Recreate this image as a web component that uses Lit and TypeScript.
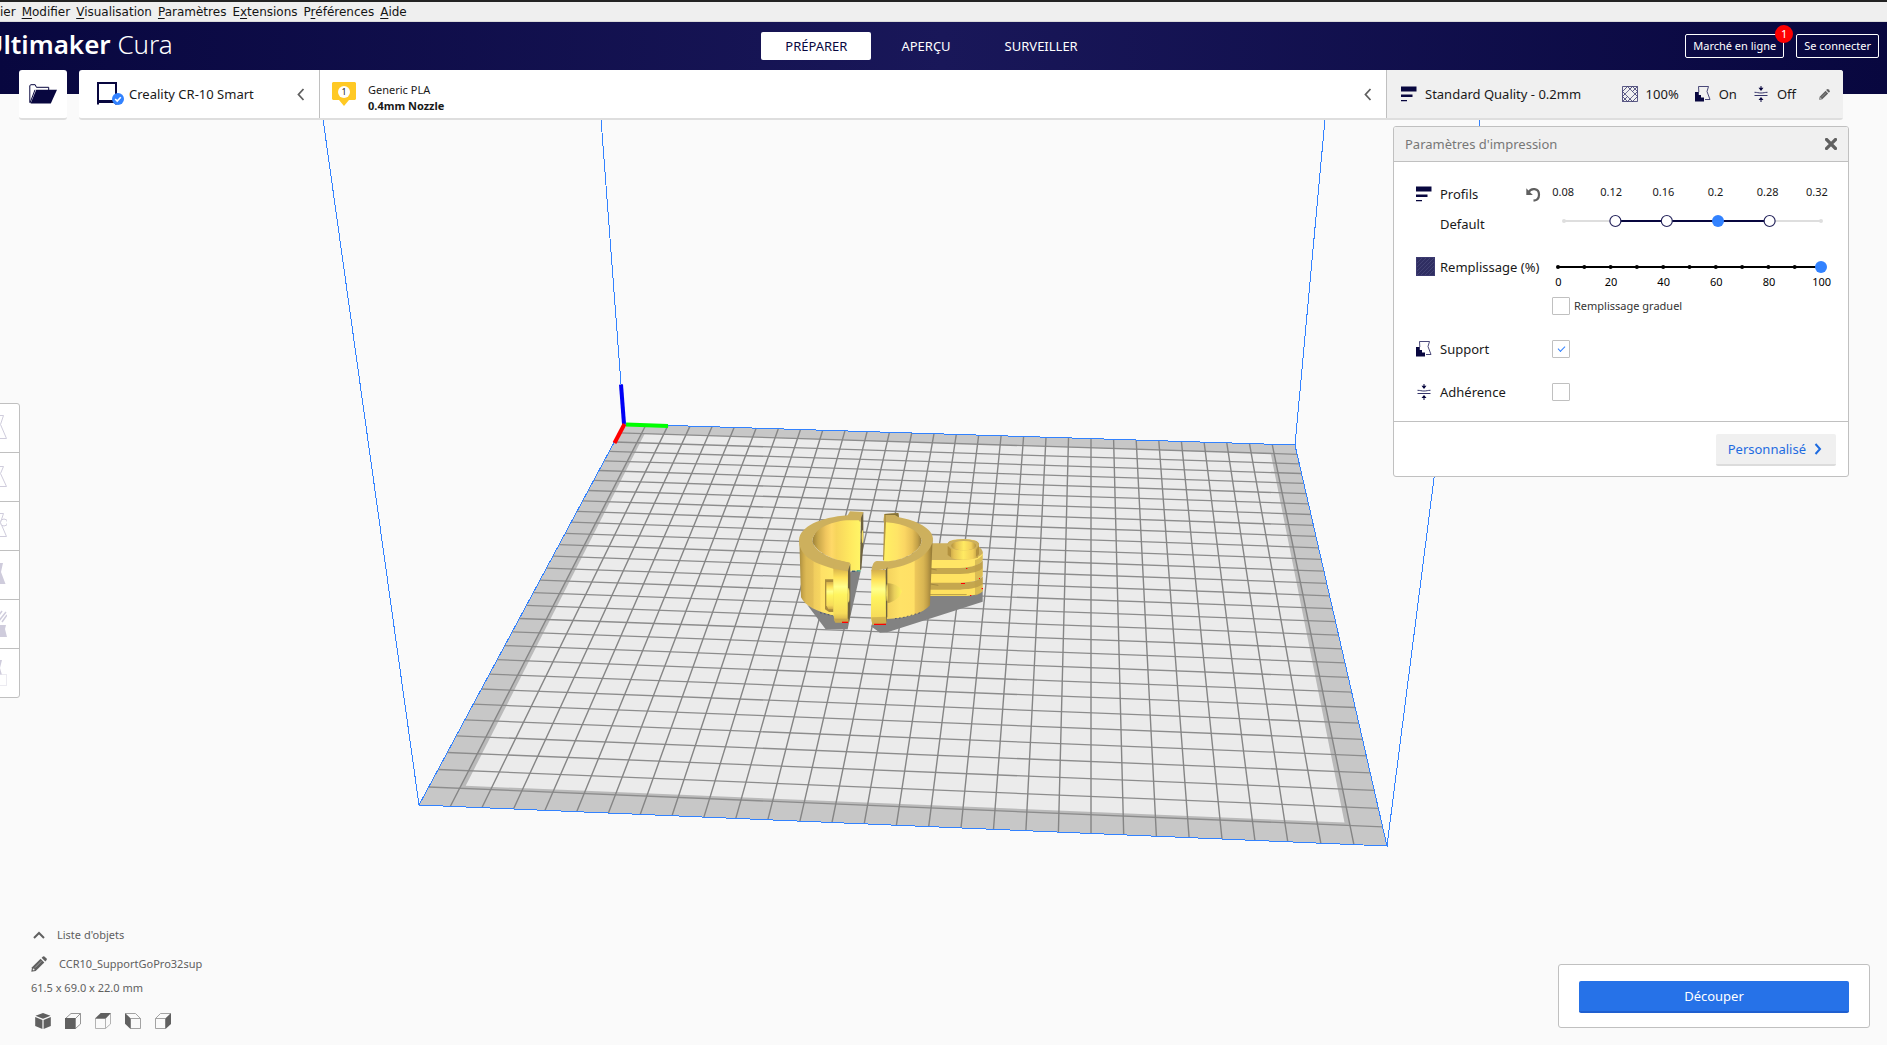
import { LitElement, html, css, svg } from "lit";
import { customElement, state } from "lit/decorators.js";

type Point = [number, number];

/* ---------- icons ---------- */
const NAVY = "#08073f";

const iconFolder = html`<svg width="28" height="20" viewBox="0 0 28 20" aria-hidden="true">
  <path d="M.8 18.5V1.5L2 .7h4.2l1.2 2.6h12.3v3.2" fill="none" stroke=${NAVY} stroke-width="1"/>
  <path d="M1 19 6 5.8" stroke=${NAVY} stroke-width="1"/>
  <path d="M7.2 5.8H28L21.8 19.5H1.6z" fill=${NAVY}/></svg>`;

const iconPrinter = html`<svg width="28" height="24" viewBox="0 0 28 24" aria-hidden="true">
  <path fill-rule="evenodd" fill=${NAVY} d="M0 0h20v22.5h-2V21H2v1.5H0zM2 2v16h16V2z"/>
  <circle cx="21" cy="17" r="6" fill="#3282ff"/>
  <path d="m18.2 17 2 2 3.6-3.8" fill="none" stroke="#fff" stroke-width="1.6"/></svg>`;

const iconChevron = (d: string, w: number, h: number, color: string, sw = 2) => html`<svg
  width=${w} height=${h} viewBox="0 0 ${w} ${h}" aria-hidden="true"><path d=${d} fill="none" stroke=${color} stroke-width=${sw}/></svg>`;

const iconSpool = html`<svg width="24" height="24" viewBox="0 0 24 24" aria-hidden="true">
  <path d="M1 0h22l1 1v16l-1 1h-6l-5 6-5-6H1l-1-1V1z" fill="#ffc924"/>
  <circle cx="12" cy="10" r="6" fill="#fff"/>
  <text x="12" y="13" font-size="9" text-anchor="middle" fill="#222">1</text></svg>`;

const iconQuality = html`<svg width="16" height="16" viewBox="0 0 16 16" aria-hidden="true">
  <path d="M0 .5h15.5v5H0zM0 8.500h11.500v2.600H0zM0 14h6v1.300H0z" fill=${NAVY}/></svg>`;

const iconInfill = html`<svg width="16" height="16" viewBox="0 0 16 16" aria-hidden="true">
  <path d="M.5.5h15v15H.5zM.5 5.500l5-5M.5 10.500 10.500.5M.5 15.500 15.500.5M5.500 15.500 15.500 5.500M10.500 15.500l5-5M10.500.5l5 5M5.500.5l10 10M.5 5.500l10 10M.5 10.500l5 5"
    fill="none" stroke="#35346a" stroke-width=".8"/>
  <path d="M8 3.500 12.500 8 8 12.500 3.500 8z" fill="#f0f0f0"/></svg>`;

const iconSolid = html`<svg width="20" height="20" viewBox="0 0 20 20" aria-hidden="true">
  <rect x=".5" y=".5" width="18" height="18" fill="#2f2e62" stroke="#3c3a70"/>
  <path d="M1 6l5-5M1 10l9-9M1 14l13-13M1 18 18 1M5 18 18 5M9 18l9-9M13 18l5-5" stroke="#4b4a7c" stroke-width=".7"/></svg>`;

const iconSupport = html`<svg width="16" height="16" viewBox="0 0 16 16" aria-hidden="true">
  <path d="M0 6h3.800v3H6v2.500h3v4H0z" fill=${NAVY}/>
  <path d="M3.800 6 3.500.5h10L12 5.500l3 8h-5" fill="none" stroke="#35346a" stroke-width=".9"/></svg>`;

const iconAdhesion = html`<svg width="16" height="16" viewBox="0 0 16 16" aria-hidden="true">
  <path d="M1.500 6.300c2.800 0 3.700.7 6.500.7s3.700-.7 6.500-.7M1.500 9.500h13" fill="none" stroke="#35346a"/>
  <path d="M8 0v2M8 14v2" stroke=${NAVY}/>
  <path d="M5.500 1.800h5L8 5zM5.500 14h5L8 11z" fill=${NAVY}/></svg>`;

const iconPencil = (size: number) => html`<svg width=${size} height=${size} viewBox="0 0 16 16" aria-hidden="true">
  <path d="M.3 15.700 1 11.300 9.600 2.700l3.700 3.700L4.700 15z" fill="#606060"/>
  <path d="M10.600 1.700 12 .4q.7-.5 1.400 0l2.200 2.200q.6.700 0 1.400l-1.300 1.400z" fill="#606060"/>
  <path d="m4 11.600 6.400-6.400" stroke="#bbb" stroke-width=".7"/><circle cx="2.600" cy="13.400" r=".9" fill="#eee"/></svg>`;

const iconClose = html`<svg width="12" height="12" viewBox="0 0 12 12" aria-hidden="true">
  <path d="m1.500 1.500 9 9m0-9-9 9" stroke="#606060" stroke-width="3.200" stroke-linecap="square"/></svg>`;

const iconUndo = html`<svg width="15" height="15" viewBox="0 0 15 15" aria-hidden="true">
  <path d="M2.500 5.300C5 .6 13 .9 13 7.700c0 3.500-2.200 5.600-5.500 6" fill="none" stroke="#606060" stroke-width="2.200"/>
  <path d="M.3 1.200V8h6.500z" fill="#606060"/></svg>`;

const viewIcons = [
  { name: "Vue 3D", body: svg`<path d="M8 0 15.500 2.800 8 5.800.5 2.800zM.2 4 7.400 6.900V16L.2 12.900zM15.800 4 8.600 6.900V16l7.200-3.100z" fill="#606060"/>` },
  { name: "Vue de face", body: svg`<path d="M.5 5.500 6 .5h9.500V11l-5 4.500M10.500 5.500l5-5" fill="none" stroke="#8a8a8a" stroke-width=".9"/><path d="M0 5h10.700v11H0z" fill="#606060"/>` },
  { name: "Vue de dessus", body: svg`<path d="M.5 5.500h10v10H.5zM10.500 15.500l5-4.500V.5" fill="none" stroke="#aaa" stroke-width=".9"/><path d="M0 5.500 5.700 0H16l-5.200 5.500z" fill="#606060"/>` },
  { name: "Vue de gauche", body: svg`<path d="M5.500 5.500h10v10h-10zM.5.5h10l5 5" fill="none" stroke="#999" stroke-width=".9"/><path d="M0 0l5.500 5.200V16L0 10.800z" fill="#606060"/>` },
  { name: "Vue de droite", body: svg`<path d="M.5 5.500h10v10H.5zM.5 5.500l5-5h10" fill="none" stroke="#999" stroke-width=".9"/><path d="M10.500 5.300 16 0v11l-5.500 5z" fill="#606060"/>` },
];

const toolIcons = [
  { name: "Déplacer", body: svg`<path d="M5.500 1.500h21l-3 9 6 14h-27l6-14z" fill="none" stroke="#cfccdc"/>` },
  { name: "Mettre à l'échelle", body: svg`<path d="M5.500 3.500h21l-3 7 6 13h-27l6-13z" fill="none" stroke="#cfccdc"/>` },
  { name: "Tourner", body: svg`<path d="M5.500 1.500h21l-3 9 6 14h-27l6-14z" fill="none" stroke="#cfccdc"/><circle cx="27" cy="10.500" r="3.500" fill="#fff" stroke="#cfccdc"/>` },
  { name: "Miroir", body: svg`<path d="M5 2h21l-2 9 4.500 12h-27l6-12z" fill="#cfccdc"/>` },
  { name: "Paramètres par modèle", body: svg`<path d="M1 15h28l-1 4 2 8H0z" fill="#cfccdc"/><path d="m19 5-4 4m7-7-7 8m10-9-8 11m12-10-8 10m9-7-5 7" stroke="#cfccdc" stroke-width="1.500"/>` },
  { name: "Bloqueur de support", body: svg`<path d="M5 1h20l-2 8 2 7H2z" fill="#cfccdc"/><path d="M14.500 15.500h15v11h-15z" fill="#fff" stroke="#d8d6e2" stroke-dasharray="1 1"/>` },
];

/* ---------- build plate, drawn in perspective ---------- */
const CORNERS: Point[] = [[624, 424], [1295, 445], [1387, 846], [419, 805]];
const CELLS = 30;

/** Projects plate coordinates (0..1 on both axes) onto the view. */
function makeProjection([[x0, y0], [x1, y1], [x2, y2], [x3, y3]]: Point[]) {
  const dx1 = x1 - x2, dx2 = x3 - x2, sx = x0 - x1 + x2 - x3;
  const dy1 = y1 - y2, dy2 = y3 - y2, sy = y0 - y1 + y2 - y3;
  const den = dx1 * dy2 - dx2 * dy1;
  const g = (sx * dy2 - dx2 * sy) / den;
  const h = (dx1 * sy - sx * dy1) / den;
  const a = x1 - x0 + g * x1, b = x3 - x0 + h * x3;
  const d = y1 - y0 + g * y1, e = y3 - y0 + h * y3;
  return (u: number, v: number): Point => {
    const w = g * u + h * v + 1;
    return [(a * u + b * v + x0) / w, (d * u + e * v + y0) / w];
  };
}
const project = makeProjection(CORNERS);
const pt = (u: number, v: number) => project(u, v).map((n) => n.toFixed(1)).join(",");
const quad = (l: number, t: number, r: number, b: number) =>
  `${pt(l / CELLS, t / CELLS)} ${pt(r / CELLS, t / CELLS)} ${pt(r / CELLS, b / CELLS)} ${pt(l / CELLS, b / CELLS)}`;
const inner = Array.from({ length: CELLS - 1 }, (_, i) => (i + 1) / CELLS);
const acrossLines = inner.map((v) => `M${pt(0, v)}L${pt(1, v)}`).join("");
const depthLines = inner.map((u) => `M${pt(u, 0)}L${pt(u, 1)}`).join("");

const model = svg`
  <g transform="translate(780 490) scale(.33333)">
    <path fill="#828282" d="M82 345 137 418h66l5-25 34-149h-30l-52 130zM272 408l28 20 22-1 286-92v-35l-158 15-90 65-40 5z"/>
    <path fill="url(#inner-left)" d="M97 152C103 112 150 90 200 86L242 80V242H208V222C150 205 105 185 97 152z"/>
    <path fill="url(#outer-left)" d="M58 150 63 322C75 348 110 365 162 377V230C90 215 60 180 58 150z"/>
    <path fill="#cdb05d" d="M57 150C60 110 120 82 203 76L210 64 250 66 246 82 241 97 236 91 200 91C150 96 103 115 97 152 103 185 150 207 208 218V240L160 236C95 218 57 195 57 150z"/>
    <path fill="#6d6140" d="M250 66 243 84 240 240 244 238 250 165z"/>
    <ellipse cx="247.500" cy="140" rx="2.500" ry="20" fill="#f5df63"/>
    <path fill="#a98b3d" d="M135 268h26v98h-14l-12-8z"/>
    <path fill="url(#tab)" d="M139 276h22v82h-16l-6-12z"/>
    <path fill="url(#tab)" d="M160 234h44v160h-40l-4-22z"/>
    <path fill="#cdb05d" d="M160 236q2-24 14-26l36 8-6 26z"/>
    <path fill="#6d6140" d="M204 242 211 220V372L207 398 203 394z"/>
    <ellipse cx="206" cy="316" rx="2.500" ry="22" fill="#f5df63"/>
    <path fill="#c7a84d" d="M161 386h44l1 12h-40z"/>
    <path fill="#f00" d="M186 395h18v4h-18z"/>
    <path fill="#133a66" d="M216 242h10v3h-10z"/><path fill="#169c93" d="M230 241h12v3h-12z"/>

    <path fill="#cdb05d" d="M451 160H510C560 150 609 165 609 190 600 215 540 220 450 212z"/>
    <path fill="#ffe566" d="M450 210H540Q595 208 608 190V208Q600 232 540 236H450z"/>
    <path fill="#c5a74e" d="M450 234H540Q595 230 608 212V238Q600 252 540 254H450z"/>
    <path fill="#ffe262" d="M450 252H540Q595 250 608 234V256Q600 276 540 280H450z"/>
    <path fill="#c5a74e" d="M450 278H540Q595 276 608 260V284Q600 298 540 300H450z"/>
    <path fill="#ffe15f" d="M450 299H540Q595 296 608 282V304Q598 316 560 318H450z"/>
    <path fill="#bd9f49" d="M585 210q18-6 23-18v110q-5 10-23 15z" opacity=".55"/>
    <path d="M450 236 470 240M450 282 475 286M450 314h110" stroke="#8f7838" stroke-width="2"/>
    <path fill="url(#tab-across)" d="M503 162q0-14 47-15 47 1 47 16l-3 40q-44 12-80 2z"/>
    <ellipse cx="550" cy="164" rx="47" ry="17" fill="#cdb05d"/>
    <ellipse cx="551" cy="167" rx="37" ry="14" fill="url(#tab-across)"/>
    <path fill="#b2913f" d="M503 168l10 10v24l-10-7zM597 168l-9 12v20l9-7z"/>

    <path fill="url(#inner-right)" d="M312 94C380 96 420 120 425 152 420 185 380 205 325 216H312z"/>
    <path fill="url(#outer-right)" d="M318 236C400 225 452 190 458 142L450 346C430 370 380 386 320 387z"/>
    <path fill="#cdb05d" d="M313 72 355 69 357 82C410 92 457 115 459 146 455 195 395 226 320 238L274 242Q278 214 290 213L325 214C385 207 424 180 425 150 415 120 378 102 318 97L310 92z"/>
    <path fill="#b49644" d="M313 73h5v22l-6 119-3-6z"/>
    <path fill="#857239" d="M313 72 355 69 357 82 351 79 345 75H316z"/>
    <path fill="url(#tab)" d="M274 240h45v160l-42 4-4-20z"/>
    <path fill="#6d6140" d="M317 240l5-9v148l-4 22z"/>
    <path fill="url(#hole)" d="M321 280C340 278 364 292 365 305 360 322 340 337 322 339z"/>
    <ellipse cx="321" cy="308" rx="2.500" ry="26" fill="#f5df63"/>
    <path fill="#c7a84d" d="M274 382l45-2v20l-42 4z" opacity=".7"/>
    <path fill="#f00" d="M282 401h36v4h-36zM558 234h4v3h-4zM543 279h12v3h-12zM597 264h3v3h-3zM605 294h4v4h-4zM570 315h4v3h-4z"/>
    <path d="M120 368l38 9M345 386l26-4 50-14" stroke="#26346a" stroke-width="2" stroke-dasharray="5 7" fill="none"/>
  </g>`;

/** The 3D view: build volume, plate and the loaded model. */
@customElement("build-view")
export class BuildView extends LitElement {
  static styles = css`
    :host { display: block; }
    .view { display: block; width: 100%; height: 100%; }
  `;
  render() {
    return html`<svg class="view" viewBox="0 0 1887 1045" preserveAspectRatio="xMidYMid slice" role="img" aria-label="CCR10_SupportGoPro32sup">
      <defs>
        <linearGradient id="outer-left"><stop stop-color="#a98d40"/><stop offset=".12" stop-color="#cdaa4c"/><stop offset=".2" stop-color="#dcb955"/><stop offset=".4" stop-color="#e3bf58"/><stop offset=".42" stop-color="#f0cd5e"/><stop offset=".6" stop-color="#f6d560"/><stop offset=".62" stop-color="#ffe066"/><stop offset="1" stop-color="#ffe869"/></linearGradient>
        <linearGradient id="inner-left"><stop stop-color="#9b8038"/><stop offset=".12" stop-color="#c9a74a"/><stop offset=".28" stop-color="#f0c65e"/><stop offset=".4" stop-color="#ffd968"/><stop offset=".5" stop-color="#f7d55c"/><stop offset=".8" stop-color="#ffea60"/><stop offset="1" stop-color="#fff566"/></linearGradient>
        <linearGradient id="outer-right"><stop stop-color="#f3d15d"/><stop offset=".3" stop-color="#ffe267"/><stop offset=".6" stop-color="#ffe066"/><stop offset=".63" stop-color="#edc75a"/><stop offset=".8" stop-color="#d9b653"/><stop offset=".88" stop-color="#c4a148"/><stop offset="1" stop-color="#8f7635"/></linearGradient>
        <linearGradient id="inner-right"><stop stop-color="#fff063"/><stop offset=".35" stop-color="#ffe466"/><stop offset=".55" stop-color="#fbd663"/><stop offset=".75" stop-color="#e6bf57"/><stop offset=".9" stop-color="#c09e47"/><stop offset="1" stop-color="#92793a"/></linearGradient>
        <linearGradient id="tab" x2="0" y2="1"><stop stop-color="#d5af4b"/><stop offset=".18" stop-color="#ffe35a"/><stop offset=".35" stop-color="#ffff8c"/><stop offset=".5" stop-color="#fff45f"/><stop offset=".85" stop-color="#f7dc5a"/><stop offset="1" stop-color="#d0ac49"/></linearGradient>
        <linearGradient id="tab-across"><stop stop-color="#b5943f"/><stop offset=".2" stop-color="#e6c355"/><stop offset=".5" stop-color="#ffea62"/><stop offset=".8" stop-color="#f2cf5a"/><stop offset="1" stop-color="#b5943f"/></linearGradient>
        <linearGradient id="hole"><stop stop-color="#b39540"/><stop offset=".5" stop-color="#e9cf5c"/><stop offset="1" stop-color="#fff060"/></linearGradient>
      </defs>
      <path d="M624 424 601 119V90M1295 445 1325 119V90M419 805 323 119V90M1387 846 1479 126V90" fill="none" stroke="#3282ff" shape-rendering="crispEdges"/>
      <polygon points=${quad(0, 0, 30, 30)} fill="#c7c7c7"/>
      <polygon points=${quad(1, 1, 29, 29)} fill="#bababa"/>
      <polygon points=${quad(1.15, 1, 28.85, 28.85)} fill="#ebebeb"/>
      <path d=${acrossLines} stroke="#8c8c8c" stroke-width="1.300"/>
      <path d=${depthLines} stroke="#858585" stroke-width="1.400"/>
      <polygon points=${quad(0, 0, 30, 30)} fill="none" stroke="#3282ff" shape-rendering="crispEdges"/>
      <path d="M621 384.500 624 424" stroke="#0000f5" stroke-width="4"/>
      <path d="M626 424.500 668 426" stroke="#0f0" stroke-width="4"/>
      <path d="M624.500 424 614.500 443" stroke="#f00" stroke-width="4"/>
      ${model}
    </svg>`;
  }
}

/** The floating print settings panel. */
@customElement("print-settings")
export class PrintSettings extends LitElement {
  @state() private profile = 3;
  @state() private infill = 100;

  static styles = css`
    :host { display: block; color: #191919; font-size: 13px; line-height: 20px; }
    .panel { background: #fff; border: 1px solid #c0c0c0; border-radius: 3px; overflow: hidden; }
    .head { display: flex; align-items: center; justify-content: space-between; height: 34px; padding: 0 11px; background: #f0f0f0; border-bottom: 1px solid #c0c0c0; }
    .title { margin: 0; font-size: 13px; font-weight: 400; color: #777; }
    button { font: inherit; border: 0; padding: 0; background: none; cursor: pointer; }
    svg { display: block; }
    .body { display: grid; row-gap: 23px; padding: 20px 0 19px; }
    .row { display: grid; grid-template-columns: 46px 112px 1fr; align-items: center; }
    .icon { justify-self: start; margin-left: 22px; }
    .name-line { display: flex; justify-content: space-between; align-items: center; }
    .reset { margin-right: 11px; }
    .profile, .infill { align-items: start; }
    .profile .icon { margin-top: 4px; }
    .labels { display: grid; grid-template-columns: 44fr 52fr 52fr 52fr 52fr 46fr; margin: 0 8px 0 -11px; font-size: 11px; text-align: center; }
    .names { display: grid; row-gap: 10px; padding-top: 2px; }
    .levels { display: grid; row-gap: 9px; }
    .slider { display: grid; height: 20px; align-items: center; }
    .slider > * { grid-area: 1 / 1; }
    .slider svg { width: 100%; height: 20px; overflow: visible; }
    .quality { margin: 0 21px 0 6px; }
    .percent { margin: 0 21px 0 0; }
    input[type="range"] { appearance: none; width: 100%; height: 12px; margin: 0; background: none; }
    input[type="range"]::-webkit-slider-thumb { appearance: none; width: 12px; height: 12px; border-radius: 50%; background: #3282ff; }
    .scale { display: grid; grid-template-columns: repeat(6, 1fr); margin: -2px 0 0 -20px; font-size: 11px; line-height: 14px; text-align: center; color: #000; }
    .check { display: flex; align-items: center; gap: 4px; margin-top: 7px; font-size: 11px; color: #333; }
    input[type="checkbox"] { appearance: none; box-sizing: border-box; display: grid; place-items: center; width: 18px; height: 18px; margin: 0; border: 1px solid #c0c0c0; background: #fff; border-radius: 1px; }
    input[type="checkbox"]:checked::before { content: ""; width: 6px; height: 3px; margin-bottom: 2px; border: solid #3282ff; border-width: 0 0 1px 1px; rotate: -45deg; }
    .foot { display: flex; justify-content: flex-end; padding: 12px 12px 10px; border-top: 1px solid #c0c0c0; }
    .custom { display: flex; align-items: center; gap: 8px; height: 32px; padding: 0 14px 0 12px; background: #f0f0f0; border-bottom: 2px solid #dcdcdc; border-radius: 2px; color: #1e6be0; }
  `;

  render() {
    const profiles = ["0.08", "0.12", "0.16", "0.2", "0.28", "0.32"];
    const at = (share: number) => `calc((100% - 12px) * ${share} + 6px)`;
    return html`<section class="panel" aria-labelledby="title">
      <div class="head"><h2 class="title" id="title">Paramètres d'impression</h2>
        <button aria-label="Fermer">${iconClose}</button></div>
      <div class="body">
        <div class="row profile">
          <span class="icon">${iconQuality}</span>
          <div class="names">
            <div class="name-line"><label for="profile">Profils</label><button class="reset" aria-label="Réinitialiser">${iconUndo}</button></div>
            <span>Default</span>
          </div>
          <div class="levels">
            <div class="labels">${profiles.map((p) => html`<span>${p}</span>`)}</div>
            <div class="slider quality">
              <svg aria-hidden="true">
                <rect style="x:6px;width:calc(100% - 12px)" y="9" height="2" fill="#dedede"/>
                ${[0, 1].map((s) => svg`<circle style="cx:${at(s)}" cy="10" r="2" fill="#dedede"/>`)}
                <rect style="x:${at(0.2)};width:calc((100% - 12px) * .6)" y="9" height="2" fill=${NAVY}/>
                ${[0.2, 0.4, 0.8].map((s) => svg`<circle style="cx:${at(s)}" cy="10" r="5.500" fill="#fff" stroke="#25245c" stroke-width="1.200"/>`)}
              </svg>
              <input id="profile" type="range" min="0" max="5" .value=${String(this.profile)}
                @input=${(e: Event) => (this.profile = +(e.target as HTMLInputElement).value)} />
            </div>
          </div>
        </div>
        <div class="row infill">
          <span class="icon">${iconSolid}</span>
          <label for="infill">Remplissage (%)</label>
          <div>
            <div class="slider percent">
              <svg aria-hidden="true">
                <rect style="x:6px;width:calc(100% - 12px)" y="9" height="2" fill="#000"/>
                ${Array.from({ length: 11 }, (_, i) => svg`<circle style="cx:${at(i / 10)}" cy="10" r="2" fill="#000"/>`)}
              </svg>
              <input id="infill" type="range" min="0" max="100" step="10" .value=${String(this.infill)}
                @input=${(e: Event) => (this.infill = +(e.target as HTMLInputElement).value)} />
            </div>
            <div class="scale">${[0, 20, 40, 60, 80, 100].map((n) => html`<span>${n}</span>`)}</div>
            <label class="check"><input type="checkbox" />Remplissage graduel</label>
          </div>
        </div>
        <div class="row"><span class="icon">${iconSupport}</span><label for="support">Support</label><input id="support" type="checkbox" checked /></div>
        <div class="row"><span class="icon">${iconAdhesion}</span><label for="adhesion">Adhérence</label><input id="adhesion" type="checkbox" /></div>
      </div>
      <div class="foot"><button class="custom">Personnalisé ${iconChevron("m1.500 1 4.500 5-4.500 5", 8, 12, "#1e6be0", 2)}</button></div>
    </section>`;
  }
}

@customElement("app-root")
export class AppRoot extends LitElement {
  static styles = css`
    :host { position: relative; display: flex; flex-direction: column; min-height: 100vh; overflow: hidden; background: #fafafa; color: #191919; font: 13px/20px "Noto Sans", "Open Sans", sans-serif; }
    svg { display: block; }
    button { font: inherit; color: inherit; border: 0; padding: 0; background: none; cursor: pointer; }
    build-view { position: absolute; inset: 0; }
    .menubar { position: relative; display: flex; gap: 6px; height: 19px; border-top: 2px solid #232323; border-bottom: 1px solid #dadada; background: #efefef; color: #141414; font: 12px/20px "DejaVu Sans", sans-serif; }
    .menubar u { text-underline-offset: 2px; }
    .top { position: relative; background: linear-gradient(#fafafa, #fafafa) 0 72px no-repeat, linear-gradient(90deg, #08073f, #191759 50%, #08073f); }
    .header { display: grid; grid-template-columns: 1fr auto 1fr; align-items: center; height: 48px; margin-left: -24px; padding: 0 8px; }
    .logo { align-self: start; margin: 0; color: #fff; font-size: 26px; line-height: 44px; font-weight: 600; }
    .logo span { font-weight: 300; }
    .tabs { display: flex; gap: 6px; }
    .tab { height: 28px; padding: 0 24px; border-radius: 2px; color: #fff; }
    .tab[aria-selected="true"] { background: #fff; color: #08073f; }
    .account { display: flex; justify-content: flex-end; gap: 12px; color: #fff; font-size: 11px; }
    .account button { position: relative; height: 24px; padding: 0 7px; border: 1px solid #fff; border-radius: 2px; line-height: 20px; }
    .badge { position: absolute; top: -10px; right: -10px; width: 18px; height: 18px; border-radius: 50%; background: #f00; line-height: 18px; text-align: center; }
    .toolbar { display: flex; gap: 12px; padding: 0 44px 0 19px; }
    .card { display: flex; box-sizing: content-box; background: #fff; border-bottom: 2px solid #dedede; border-radius: 3px; overflow: hidden; height: 48px; }
    .open { width: 48px; justify-content: center; align-items: center; }
    .stages { flex: 1; }
    .stage { display: flex; align-items: center; text-align: left; border-right: 1px solid #c0c0c0; }
    .machine { width: 241px; padding: 0 14px 0 18px; gap: 4px; }
    .grow { flex: 1; }
    .material { flex: 1; padding: 0 14px 0 12px; gap: 12px; font-size: 11px; line-height: 16px; }
    .material b { display: block; font-weight: 700; }
    .material .text { flex: 1; padding-top: 8px; }
    .summary { width: 456px; padding: 0 13px 0 14px; background: #f0f0f0; border-right: 0; }
    .summary .value { margin-left: 8px; }
    .summary .next { margin-left: 16px; }
    .summary .edit { margin-left: 23px; }
    .workspace { position: relative; flex: 1; display: grid; grid-template: 1fr auto / auto 1fr; }
    .tools { grid-area: 1 / 1 / 3 / 2; align-self: center; justify-self: start; margin: 0 0 64px -24px; border: 1px solid #c0c0c0; border-radius: 3px; background: #fff; overflow: hidden; }
    .tool { display: grid; place-items: center; width: 42px; height: 49px; padding-right: 12px; border-bottom: 1px solid #c0c0c0; }
    .tool:last-child { border-bottom: 0; height: 48px; }
    .tool svg { justify-self: end; }
    .objects { grid-area: 2 / 1; display: grid; justify-items: start; padding: 0 0 16px 31px; color: #606060; font-size: 11px; line-height: 20px; }
    .objects button { display: flex; align-items: center; }
    .objects .list { gap: 12px; padding-left: 2px; }
    .rename { gap: 12px; margin: 9px 0 4px; }
    .views { display: flex; gap: 14px; margin: 15px 0 0 4px; }
    .settings { grid-area: 1 / 2; justify-self: end; align-self: start; width: 456px; margin: 6px 38px 0 0; }
    .action { grid-area: 2 / 2; justify-self: end; align-self: end; margin: 0 17px 17px 0; padding: 16px 20px 14px; width: 270px; background: #fff; border: 1px solid #c0c0c0; border-radius: 3px; }
    .slice { width: 100%; height: 32px; border-bottom: 2px solid #1f5fd0; border-radius: 2px; background: #2672e8; color: #fff; }
  `;

  render() {
    const menu = [["ier", "", ""], ["", "M", "odifier"], ["", "V", "isualisation"], ["", "P", "aramètres"], ["E", "x", "tensions"], ["P", "r", "éférences"], ["", "A", "ide"]];
    const back = iconChevron("M6.500 1 1.500 6.500 6.500 12", 8, 13, "#606060", 1.8);
    return html`
      <build-view></build-view>
      <nav class="menubar" aria-label="Menu">${menu.map(([a, k, b]) => html`<span>${a}${k ? html`<u>${k}</u>` : ""}${b}</span>`)}</nav>
      <div class="top">
        <header class="header">
          <h1 class="logo">Ultimaker <span>Cura</span></h1>
          <div class="tabs" role="tablist">
            <button class="tab" role="tab" aria-selected="true">PRÉPARER</button>
            <button class="tab" role="tab" aria-selected="false">APERÇU</button>
            <button class="tab" role="tab" aria-selected="false">SURVEILLER</button>
          </div>
          <div class="account">
            <button>Marché en ligne<span class="badge">1</span></button>
            <button>Se connecter</button>
          </div>
        </header>
        <div class="toolbar">
          <button class="card open" aria-label="Ouvrir">${iconFolder}</button>
          <div class="card stages">
            <button class="stage machine">${iconPrinter}<span class="grow">Creality CR-10 Smart</span>${back}</button>
            <button class="stage material">${iconSpool}<span class="text">Generic PLA<b>0.4mm Nozzle</b></span>${back}</button>
            <button class="stage summary">
              ${iconQuality}<span class="value grow">Standard Quality - 0.2mm</span>
              ${iconInfill}<span class="value">100%</span>
              <span class="next">${iconSupport}</span><span class="value">On</span>
              <span class="next">${iconAdhesion}</span><span class="value">Off</span>
              <span class="edit">${iconPencil(11)}</span>
            </button>
          </div>
        </div>
      </div>
      <main class="workspace">
        <div class="tools" role="toolbar" aria-label="Outils">
          ${toolIcons.map((t) => html`<button class="tool" aria-label=${t.name}><svg width="30" height="28" viewBox="0 0 30 28">${t.body}</svg></button>`)}
        </div>
        <div class="objects">
          <button class="list">${iconChevron("M1 7 6 2l5 5", 12, 9, "#606060", 2)}Liste d'objets</button>
          <button class="rename">${iconPencil(16)}CCR10_SupportGoPro32sup</button>
          <span>61.5 x 69.0 x 22.0 mm</span>
          <div class="views">${viewIcons.map((v) => html`<button aria-label=${v.name}><svg width="16" height="16" viewBox="0 0 16 16">${v.body}</svg></button>`)}</div>
        </div>
        <print-settings class="settings"></print-settings>
        <div class="action"><button class="slice">Découper</button></div>
      </main>`;
  }
}
